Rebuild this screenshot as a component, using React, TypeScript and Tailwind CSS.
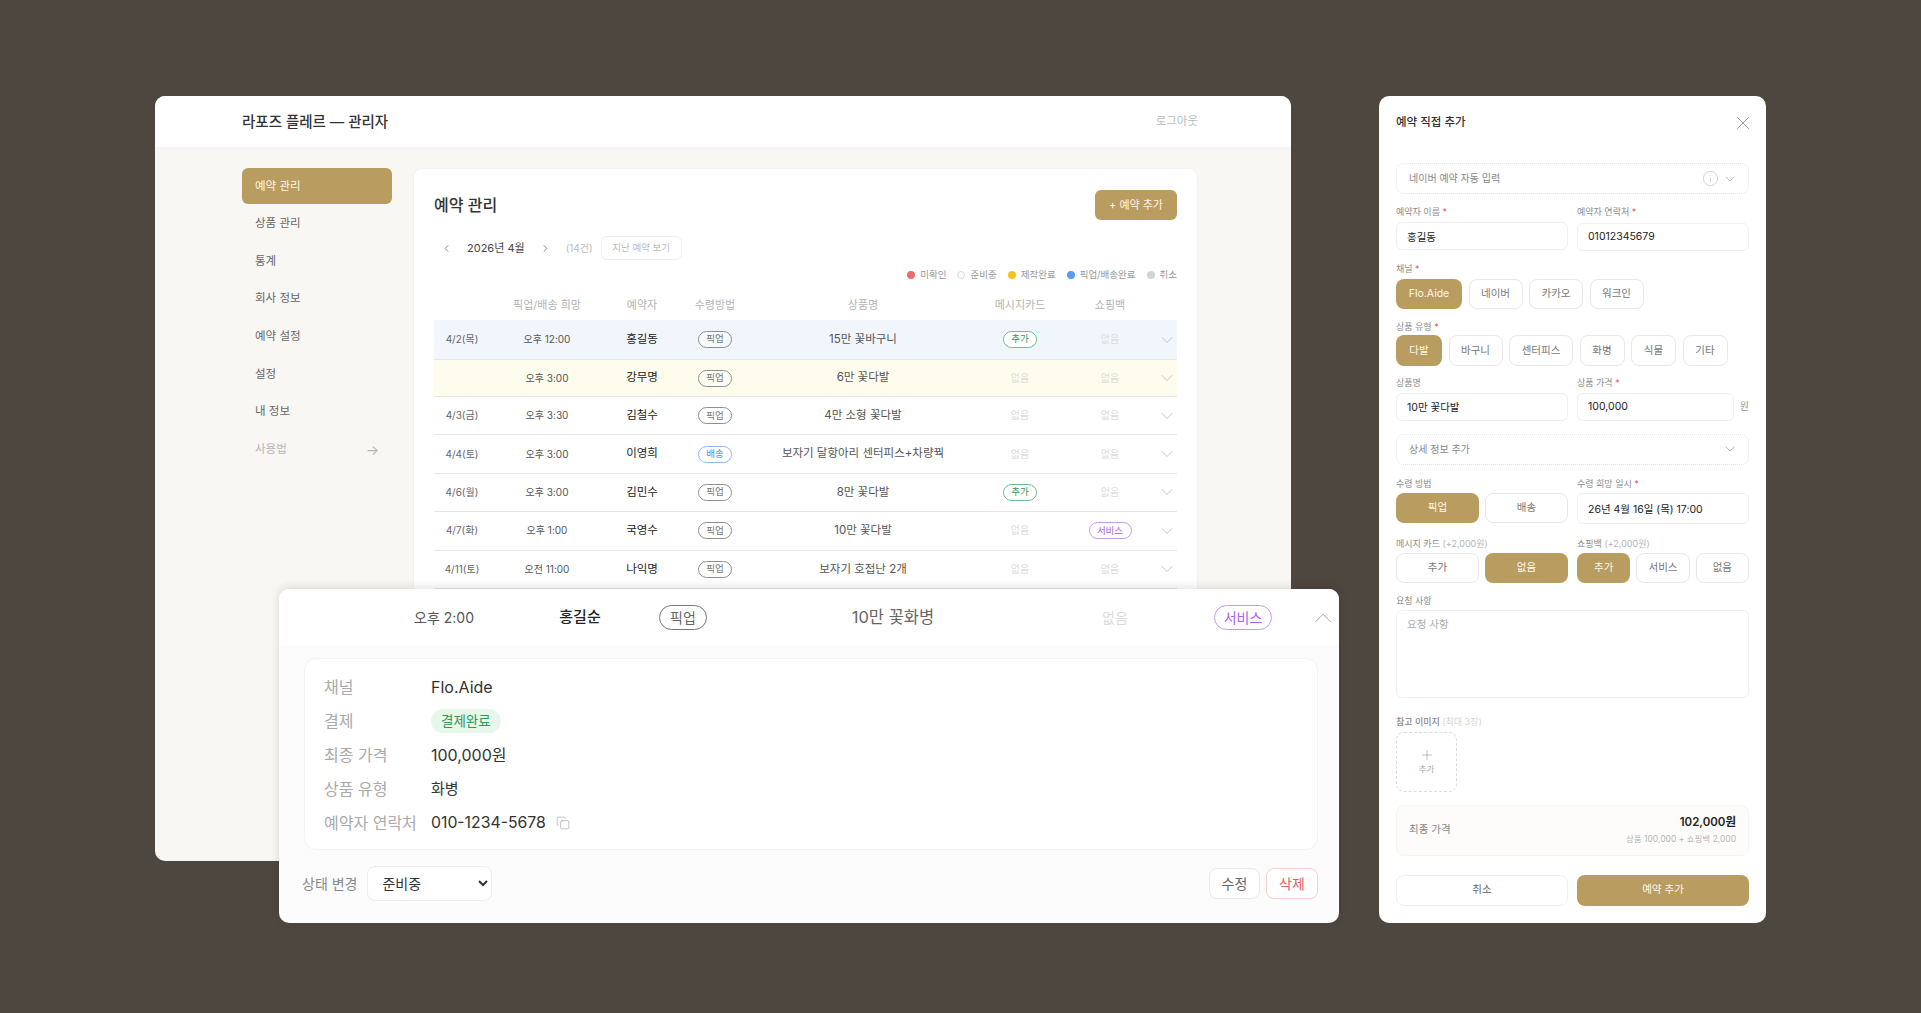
import { ChevronDown, ChevronUp, ChevronLeft, ChevronRight, Copy, Info, Plus, X } from 'lucide-react'

type Badge = 'pickup' | 'delivery' | 'add' | 'service' | 'none'

interface Row {
  date: string
  time: string
  name: string
  method: Badge
  product: string
  card: Badge
  bag: Badge
  style?: string
}

const ROWS: Row[] = [
  { date: '4/2(목)', time: '오후 12:00', name: '홍길동', method: 'pickup', product: '15만 꽃바구니', card: 'add', bag: 'none', style: 'h-[40px] bg-[#f1f6fc]' },
  { date: '', time: '오후 3:00', name: '강무명', method: 'pickup', product: '6만 꽃다발', card: 'none', bag: 'none', style: 'h-[37px] bg-[#fefced]' },
  { date: '4/3(금)', time: '오후 3:30', name: '김철수', method: 'pickup', product: '4만 소형 꽃다발', card: 'none', bag: 'none', style: 'h-[38.4px]' },
  { date: '4/4(토)', time: '오후 3:00', name: '이영희', method: 'delivery', product: '보자기 달항아리 센터피스+차량꿕', card: 'none', bag: 'none', style: 'h-[38.4px]' },
  { date: '4/6(월)', time: '오후 3:00', name: '김민수', method: 'pickup', product: '8만 꽃다발', card: 'add', bag: 'none', style: 'h-[38.4px]' },
  { date: '4/7(화)', time: '오후 1:00', name: '국영수', method: 'pickup', product: '10만 꽃다발', card: 'none', bag: 'service', style: 'h-[38.4px]' },
  { date: '4/11(토)', time: '오전 11:00', name: '나익명', method: 'pickup', product: '보자기 호접난 2개', card: 'none', bag: 'none', style: 'h-[38.4px]' },
]

const NAV = ['예약 관리', '상품 관리', '통계', '회사 정보', '예약 설정', '설정', '내 정보']

const LEGEND = [
  { label: '미확인', dot: 'bg-[#ec6d6d]' },
  { label: '준비중', dot: 'bg-white border border-[#d9d9d9]' },
  { label: '제작완료', dot: 'bg-[#f8c21c]' },
  { label: '픽업/배송완료', dot: 'bg-[#5e9bf2]' },
  { label: '취소', dot: 'bg-[#d4d4d4]' },
]

function Tag({ kind }: { kind: Badge }) {
  if (kind === 'none') return <span className="text-[10px] text-[#dcdcdc]">없음</span>
  if (kind === 'pickup')
    return <span className="flex h-[17px] w-[34px] items-center justify-center rounded-full border border-[#8f8f8f] bg-white/40 text-[9.5px] text-[#777]">픽업</span>
  if (kind === 'delivery')
    return <span className="flex h-[17px] w-[34px] items-center justify-center rounded-full border border-[#8db8f5] bg-white text-[9.5px] text-[#4f8fe8]">배송</span>
  if (kind === 'add')
    return <span className="flex h-[17px] w-[34px] items-center justify-center rounded-full border border-[#69c088] bg-white text-[9.5px] text-[#2f9a58]">추가</span>
  return <span className="flex h-[17px] w-[43px] items-center justify-center rounded-full border border-[#c79af0] bg-white text-[9.5px] text-[#a763e6]">서비스</span>
}

function Label({ text, required, extra }: { text: string; required?: boolean; extra?: string }) {
  return (
    <div className="h-3 text-[9px] leading-3 text-[#8a8a8a]">
      {text}
      {required && <span className="text-[#e0555b]"> *</span>}
      {extra && <span className="text-[#b5b5b5]"> {extra}</span>}
    </div>
  )
}

function Field({ value, className = '' }: { value: string; className?: string }) {
  return (
    <input
      readOnly
      value={value}
      className={`h-7 w-full rounded-[6px] border border-[#f0f0f0] bg-white px-[10px] text-[10.5px] text-[#222] outline-none ${className}`}
    />
  )
}

function Chip({ text, active, className = '' }: { text: string; active?: boolean; className?: string }) {
  return (
    <button
      className={`flex h-full items-center justify-center rounded-[8px] pt-px text-[10.5px] ${
        active ? 'bg-[#b99c60] text-[#fdf8ea]' : 'border border-[#e8e8e8] bg-white text-[#777]'
      } ${className}`}
    >
      {text}
    </button>
  )
}

function DetailRow({ label, children }: { label: string; children: React.ReactNode }) {
  return (
    <div className="flex h-[34px] items-center">
      <span className="w-[107px] shrink-0 text-[16px] text-[#aaa]">{label}</span>
      {children}
    </div>
  )
}

export default function App() {
  return (
    <div
      className="relative h-[1013px] w-full overflow-hidden bg-[#4e4740]"
      style={{ fontFamily: '"Inter", "Noto Sans CJK KR", sans-serif' }}
    >
      {/* admin window */}
      <div className="absolute left-[155px] top-[96px] h-[765px] w-[1136px] overflow-hidden rounded-[10px] bg-[#f9f7f3]">
        <header className="flex h-[51px] items-center justify-between bg-white pl-[87px] pr-[93px]">
          <span className="text-[14.5px] font-medium text-[#333]">라포즈 플레르 — 관리자</span>
          <span className="text-[11.5px] text-[#bbb]">로그아웃</span>
        </header>

        <div className="flex gap-[21px] pl-[87px] pt-[21px]">
          <nav className="flex w-[150px] shrink-0 flex-col gap-[2px]">
            {NAV.map((item, i) => (
              <div
                key={item}
                className={`flex h-[35.6px] items-center rounded-[6px] px-[13px] pt-px text-[11.5px] ${
                  i === 0 ? 'bg-[#b99c60] text-[#fdf8ea]' : 'text-[#666]'
                }`}
              >
                {item}
              </div>
            ))}
            <div className="flex h-[35.6px] items-center justify-between px-[13px] pt-px text-[11.5px] text-[#b5b5b5]">
              사용법
              <span className="text-[14px]">→</span>
            </div>
          </nav>

          <main className="h-[700px] w-[785px] rounded-[10px] border border-[#f4f2ee] bg-white px-5">
            <div className="mt-[21px] flex h-[30px] items-center justify-between">
              <h1 className="text-[16px] font-medium text-[#333]">예약 관리</h1>
              <button className="flex h-[30px] w-[82px] items-center justify-center rounded-[6px] bg-[#b99c60] text-[11px] text-[#fdf8ea]">
                + 예약 추가
              </button>
            </div>

            <div className="mt-4 flex h-6 items-center text-[#555]">
              <ChevronLeft size={11} strokeWidth={1.5} className="ml-[7px] mr-[15px]" />
              <span className="text-[11px] text-[#444]">2026년 4월</span>
              <ChevronRight size={11} strokeWidth={1.5} className="ml-[15px] mr-[15px]" />
              <span className="mr-[8px] text-[10px] text-[#bbb]">(14건)</span>
              <button className="flex h-6 w-[81px] items-center justify-center rounded-[6px] border border-[#efefef] text-[9.5px] text-[#bbb]">
                지난 예약 보기
              </button>
            </div>

            <div className="mt-[9px] flex h-3 items-center justify-end gap-[11px]">
              {LEGEND.map((l) => (
                <span key={l.label} className="flex items-center gap-[5px] text-[9.5px] text-[#999]">
                  <i className={`block h-2 w-2 rounded-full ${l.dot}`} />
                  {l.label}
                </span>
              ))}
            </div>

            <div className="grid h-[39px] grid-cols-[56px_114px_76px_70px_226px_88px_92px_21px] items-center pt-[9px] text-center text-[11px] text-[#b3b3b3]">
              <span />
              <span>픽업/배송 희망</span>
              <span>예약자</span>
              <span>수령방법</span>
              <span>상품명</span>
              <span>메시지카드</span>
              <span>쇼핑백</span>
              <span />
            </div>

            {ROWS.map((r) => (
              <div
                key={r.name}
                className={`grid grid-cols-[56px_114px_76px_70px_226px_88px_92px_21px] items-center justify-items-center border-b border-[#e6e6e6] ${r.style ?? ''}`}
              >
                <span className="text-[10px] text-[#666]">{r.date}</span>
                <span className="text-[10px] text-[#555]">{r.time}</span>
                <span className="text-[11.5px] text-[#222]">{r.name}</span>
                <Tag kind={r.method} />
                <span className="whitespace-nowrap text-[11.5px] text-[#555]">{r.product}</span>
                <Tag kind={r.card} />
                <Tag kind={r.bag} />
                <ChevronDown size={20} strokeWidth={0.8} className="text-[#aaa]" />
              </div>
            ))}
          </main>
        </div>
      </div>

      {/* expanded booking row */}
      <section className="absolute left-[279px] top-[589px] h-[334px] w-[1060px] rounded-[10px] bg-[#fcfcfc] shadow-[0_-2px_10px_rgba(0,0,0,0.12)]">
        <div className="grid h-[56px] grid-cols-[120px_152px_54px_366px_78px_50px_78px_57px] items-center justify-items-center rounded-t-[10px] bg-white pl-[105px]">
          <span className="text-[14px] text-[#555]">오후 2:00</span>
          <span className="text-[15px] font-medium text-[#222]">홍길순</span>
          <span className="flex h-[25px] w-[48px] items-center justify-center rounded-full border border-[#777] text-[14px] text-[#666]">픽업</span>
          <span className="text-[16.5px] text-[#666]">10만 꽃화병</span>
          <span className="text-[14px] text-[#dcdcdc]">없음</span>
          <span />
          <span className="flex h-[25px] w-[58px] items-center justify-center rounded-full border border-[#c79af0] text-[14px] text-[#a763e6]">서비스</span>
          <ChevronUp size={30} strokeWidth={0.7} className="ml-[24px] mt-px text-[#999]" />
        </div>

        <div className="mx-[25px] mt-[13px] h-[192px] w-[1014px] rounded-[12px] border border-[#f3f3f3] bg-white px-[19px] py-[11px]">
          <DetailRow label="채널">
            <span className="text-[16px] text-[#333]">Flo.Aide</span>
          </DetailRow>
          <DetailRow label="결제">
            <span className="flex h-6 items-center rounded-full bg-[#e6f8ea] px-[10px] text-[13.5px] text-[#2f9a58]">결제완료</span>
          </DetailRow>
          <DetailRow label="최종 가격">
            <span className="text-[16px] text-[#333]">100,000원</span>
          </DetailRow>
          <DetailRow label="상품 유형">
            <span className="text-[15px] text-[#333]">화병</span>
          </DetailRow>
          <DetailRow label="예약자 연락처">
            <span className="text-[15.8px] text-[#333]">010-1234-5678</span>
            <Copy size={14} strokeWidth={1.25} className="ml-[10px] text-[#aaa]" />
          </DetailRow>
        </div>

        <div className="mx-[23px] mt-4 flex h-[35px] items-center">
          <span className="mr-[10px] text-[14px] text-[#888]">상태 변경</span>
          <select className="h-[35px] w-[125px] rounded-[8px] border border-[#ededed] bg-white px-[10px] text-[14px] text-[#333]">
            <option>준비중</option>
          </select>
          <button className="ml-auto h-[31px] w-[51px] rounded-[8px] border border-[#eaeaea] bg-white text-[14px] text-[#666]">수정</button>
          <button className="ml-[6px] mr-[-2px] h-[31px] w-[52px] rounded-[8px] border border-[#f9d0d0] bg-white text-[14px] text-[#e85f5f]">삭제</button>
        </div>
      </section>

      {/* manual booking form */}
      <aside className="absolute left-[1379px] top-[96px] h-[827px] w-[387px] rounded-[10px] bg-white px-[17px] pt-[19px]">
        <div className="flex h-4 items-center justify-between">
          <h2 className="text-[11.5px] font-medium text-[#333]">예약 직접 추가</h2>
          <X size={22} strokeWidth={0.8} className="mr-[-5px] text-[#777]" />
        </div>

        <div className="mt-[32px] flex h-[31px] items-center rounded-[8px] border border-dotted border-[#e4e4e4] pl-[12px] pr-[10px] text-[10px] text-[#888]">
          네이버 예약 자동 입력
          <Info size={17} strokeWidth={0.7} className="ml-auto text-[#aaa]" />
          <ChevronDown size={16} strokeWidth={0.9} className="ml-[3px] text-[#999]" />
        </div>

        <div className="mt-3 grid grid-cols-2 gap-x-[9px]">
          <div>
            <Label text="예약자 이름" required />
            <div className="mt-1"><Field value="홍길동" /></div>
          </div>
          <div>
            <Label text="예약자 연락처" required />
            <div className="mt-1"><Field value="01012345679" /></div>
          </div>
        </div>

        <div className="mt-3"><Label text="채널" required /></div>
        <div className="mt-1 flex h-[30px] gap-[6.5px]">
          <Chip text="Flo.Aide" active className="w-[66px]" />
          <Chip text="네이버" className="w-[54px]" />
          <Chip text="카카오" className="w-[54px]" />
          <Chip text="워크인" className="w-[54px]" />
        </div>

        <div className="mt-3"><Label text="상품 유형" required /></div>
        <div className="mt-[2px] flex h-[31px] gap-[6.5px]">
          <Chip text="다발" active className="w-[46px]" />
          <Chip text="바구니" className="w-[54px]" />
          <Chip text="센터피스" className="w-[64px]" />
          <Chip text="화병" className="w-[45px]" />
          <Chip text="식물" className="w-[45px]" />
          <Chip text="기타" className="w-[45px]" />
        </div>

        <div className="mt-[11px] grid grid-cols-2 gap-x-[9px]">
          <div>
            <Label text="상품명" />
            <div className="mt-1"><Field value="10만 꽃다발" /></div>
          </div>
          <div>
            <Label text="상품 가격" required />
            <div className="mt-1 flex items-center">
              <Field value="100,000" />
              <span className="ml-[6px] text-[10px] text-[#999]">원</span>
            </div>
          </div>
        </div>

        <div className="mt-[13px] flex h-[31px] items-center justify-between rounded-[8px] border border-dotted border-[#e4e4e4] pl-3 pr-[10px] text-[10px] text-[#888]">
          상세 정보 추가
          <ChevronDown size={16} strokeWidth={0.9} className="text-[#999]" />
        </div>

        <div className="mt-[13px] grid grid-cols-2 gap-x-[9px]">
          <div>
            <Label text="수령 방법" />
            <div className="mt-[3px] grid h-[30px] grid-cols-2 gap-[6px]">
              <Chip text="픽업" active />
              <Chip text="배송" />
            </div>
          </div>
          <div>
            <Label text="수령 희망 일시" required />
            <div className="mt-[3px]"><Field value="26년 4월 16일 (목) 17:00" className="h-[31px]" /></div>
          </div>
        </div>

        <div className="mt-[14px] grid grid-cols-2 gap-x-[9px]">
          <div>
            <Label text="메시지 카드" extra="(+2,000원)" />
            <div className="mt-[3px] grid h-[30px] grid-cols-2 gap-[6px]">
              <Chip text="추가" />
              <Chip text="없음" active />
            </div>
          </div>
          <div>
            <Label text="쇼핑백" extra="(+2,000원)" />
            <div className="mt-[3px] grid h-[30px] grid-cols-3 gap-[6px]">
              <Chip text="추가" active />
              <Chip text="서비스" />
              <Chip text="없음" />
            </div>
          </div>
        </div>

        <div className="mt-3"><Label text="요청 사항" /></div>
        <textarea
          readOnly
          placeholder="요청 사항"
          className="mt-[3px] block h-[88px] w-full resize-none rounded-[6px] border border-[#f0f0f0] px-[10px] py-[6px] text-[10.5px] outline-none placeholder:text-[#aaa]"
        />

        <div className="mt-[18px] h-3 text-[9px] leading-3 font-medium text-[#888]">
          참고 이미지 <span className="font-normal text-[#d5d5d5]">(최대 3장)</span>
        </div>
        <div className="mt-1 flex h-[60px] w-[61px] flex-col items-center justify-center rounded-[8px] border border-dashed border-[#dcdcdc] text-[8.5px] text-[#aaa]">
          <Plus size={16} strokeWidth={0.8} className="text-[#888]" />
          추가
        </div>

        <div className="mt-[13px] flex h-[51px] items-center justify-between rounded-[8px] border border-[#f6f5f3] bg-[#fdfcfb] px-3">
          <span className="text-[10.5px] text-[#888]">최종 가격</span>
          <div className="text-right">
            <div className="text-[11.5px] font-semibold text-[#222]">102,000원</div>
            <div className="mt-[2px] text-[8.5px] text-[#b5b5b5]">상품 100,000 + 쇼핑백 2,000</div>
          </div>
        </div>

        <div className="mt-[19px] grid h-[31px] grid-cols-2 gap-x-[9px]">
          <button className="rounded-[8px] border border-[#efefef] bg-white text-[10.5px] text-[#666]">취소</button>
          <button className="rounded-[8px] bg-[#b99c60] text-[10.5px] text-[#fdf8ea]">예약 추가</button>
        </div>
      </aside>
    </div>
  )
}
